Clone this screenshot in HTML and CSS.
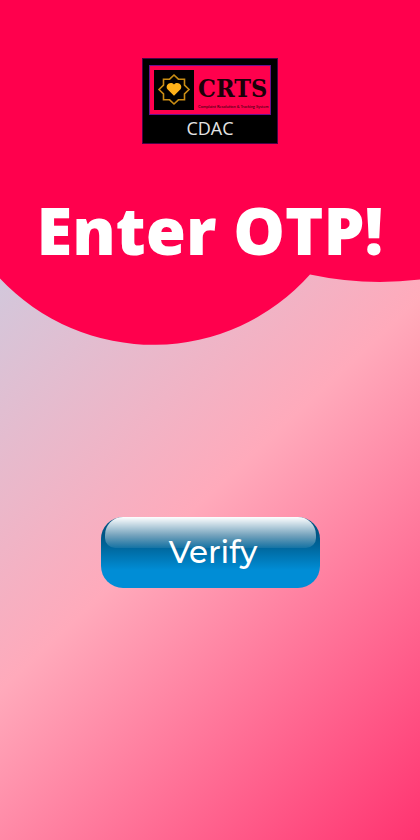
FILE: index.html
```html
<!DOCTYPE html>
<html lang="en">
<head>
<meta charset="utf-8">
<meta name="viewport" content="width=device-width, initial-scale=1">
<title>Enter OTP</title>
<link rel="stylesheet" href="styles.css">
</head>
<body>
<div class="screen">
  <header class="hero">
    <svg class="hero-shape" viewBox="0 0 420 346" preserveAspectRatio="none" aria-hidden="true">
      <path d="M0 0H420V279.500A334 334 0 0 1 310 274.500A210 210 0 0 1 0 278.500Z" fill="#ff004d"/>
    </svg>
    <div class="logo">
      <div class="logo-panel">
        <svg class="emblem" viewBox="0 0 40 40" aria-hidden="true">
          <rect width="40" height="40" fill="#000"/>
          <path d="M20 5L24.400 9.200H30.500V15.200L35 19.500L30.500 23.800V29.800H24.400L20 34L15.600 29.800H9.500V23.800L5 19.500L9.500 15.200V9.200H15.600Z" fill="none" stroke="#c98c14" stroke-width="1.600"/>
          <path d="M20 25.800L13.500 19.300C10.500 15 16.500 10.500 20 14.500C23.500 10.500 29.500 15 26.500 19.300Z" fill="#ffb119"/>
        </svg>
        <div class="brand">
          <span class="brand-name">CRTS</span>
          <span class="brand-line">Complaint Resolution &amp; Tracking System</span>
        </div>
      </div>
      <span class="org">CDAC</span>
    </div>
    <h1 class="title">Enter OTP!</h1>
  </header>
  <main class="content">
    <button class="verify" type="button">Verify</button>
  </main>
</div>
</body>
</html>
```
FILE: styles.css
```css
* {
  box-sizing: border-box;
}

body {
  margin: 0;
  font-family: "Open Sans", "Noto Sans", sans-serif;
}

.screen {
  display: flex;
  flex-direction: column;
  min-height: 100vh;
  background: linear-gradient(137deg, #b4dcf2 0%, #ffaabb 56%, #ff3370 100%);
}

.hero {
  position: relative;
  display: flex;
  flex-direction: column;
  align-items: center;
  gap: 41px;
  padding: 58px 0 71px;
}

.hero-shape {
  position: absolute;
  inset: 0;
  width: 100%;
  height: 100%;
}

.logo {
  position: relative;
  display: flex;
  flex-direction: column;
  align-items: center;
  width: 136px;
  padding: 6px 6px 4px;
  border: 1px solid #4a0048;
  background: #000;
}

.logo-panel {
  display: flex;
  align-items: center;
  width: 100%;
  height: 50px;
  gap: 4px;
  padding: 0 4px;
  border: 1px solid #6a1090;
  background: #ff004d;
}

.emblem {
  flex: none;
  width: 40px;
  height: 40px;
}

.brand {
  display: flex;
  flex-direction: column;
  padding-top: 5px;
  color: #1a0008;
  white-space: nowrap;
}

.brand-name {
  font: bold 25px/29px "DejaVu Serif Condensed", "DejaVu Serif", serif;
}

.brand-line {
  font: 4px/8px Lato, sans-serif;
}

.org {
  color: #e4e4e4;
  font-size: 18px;
  line-height: 26px;
  height: 24px;
}

.title {
  position: relative;
  margin: 0;
  color: #fff;
  font-size: 65px;
  font-weight: 800;
  line-height: 90px;
  white-space: nowrap;
}

.content {
  display: flex;
  flex-direction: column;
  align-items: center;
  padding: 171px 24px 24px;
}

.verify {
  position: relative;
  width: 100%;
  max-width: 219px;
  height: 71px;
  padding: 0 0 0 6px;
  border: 0;
  border-radius: 22px;
  background: linear-gradient(#005585 25%, #00669b 42%, #008dd6 75%);
  color: #fff;
  font: 500 31px/71px Montserrat, Inter, sans-serif;
  isolation: isolate;
}

.verify::before {
  content: "";
  position: absolute;
  z-index: -1;
  inset: 0 4px 40px;
  border-radius: 18px 18px 10px 10px;
  background: linear-gradient(#fff, rgba(255, 255, 255, 0.08));
}
```
